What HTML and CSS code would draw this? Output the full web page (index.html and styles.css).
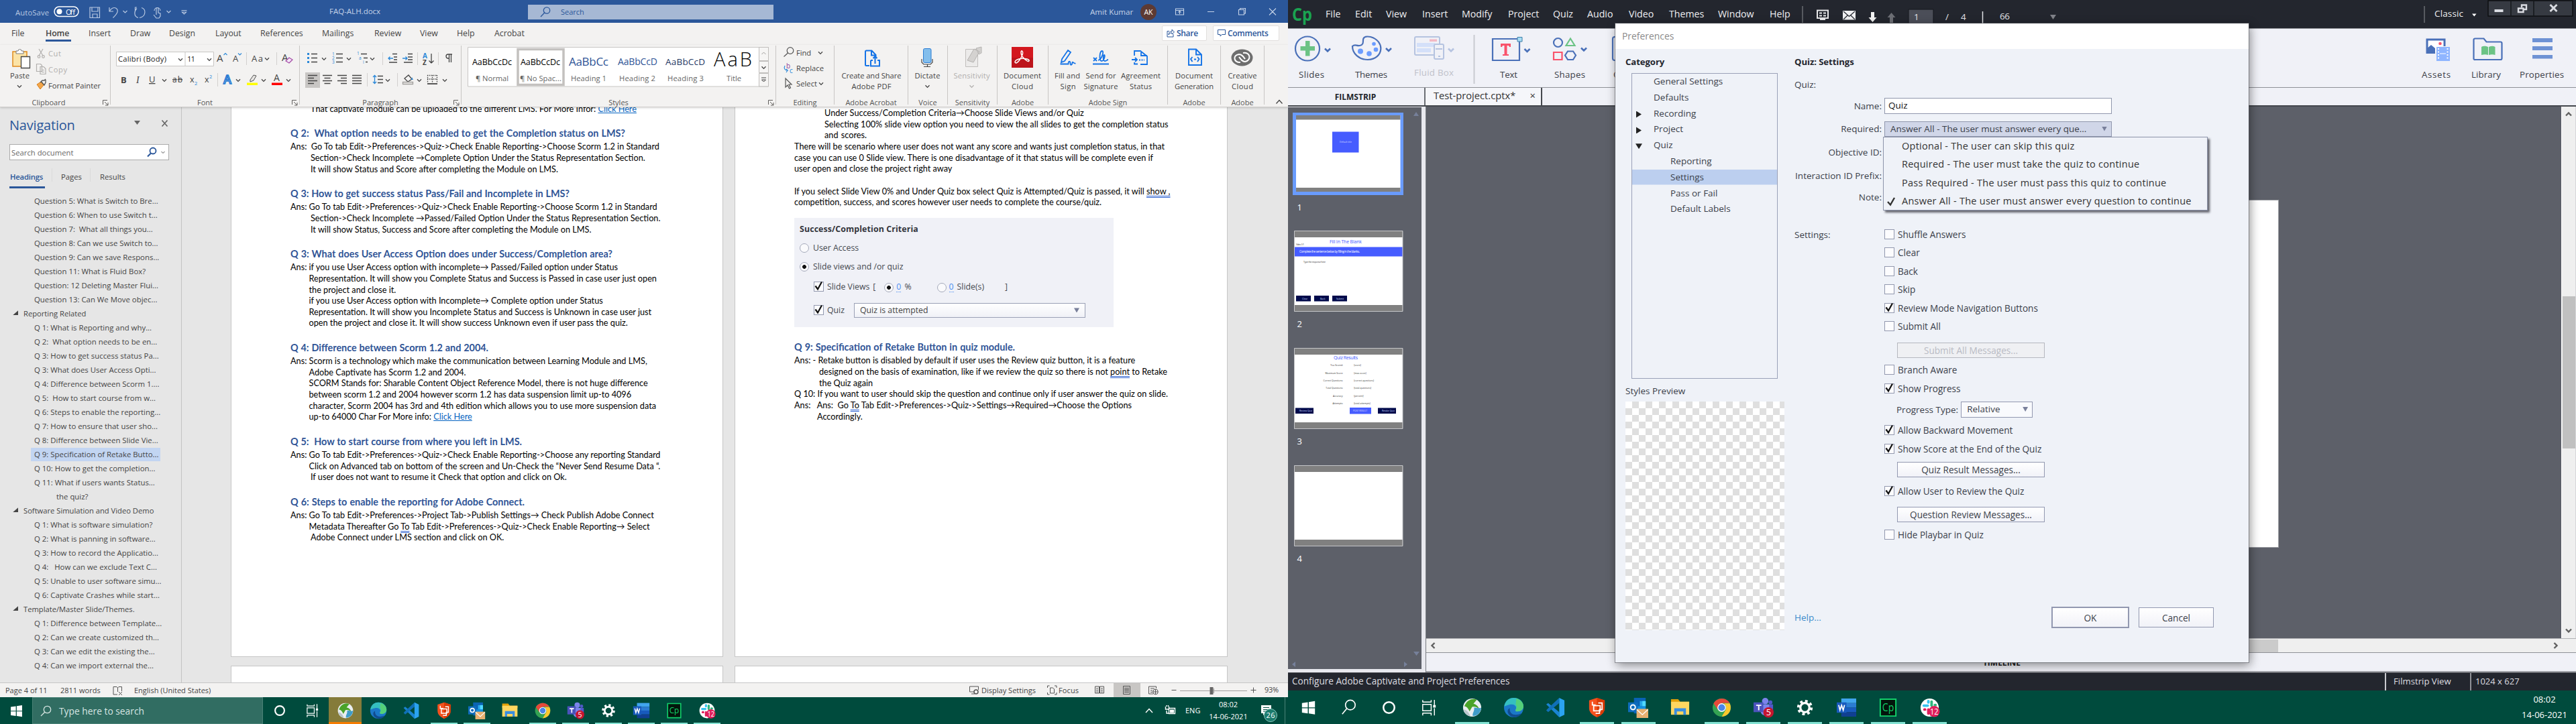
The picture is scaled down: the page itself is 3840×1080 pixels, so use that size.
FILE: index.html
```html
<!DOCTYPE html>
<html lang="en">
<head>
<meta charset="utf-8">
<title>FAQ-ALH.docx and Adobe Captivate</title>
<link rel="stylesheet" href="styles.css">
</head>
<body>
<svg class="defs" aria-hidden="true">
  <symbol id="chev" viewBox="0 0 8 6"><path d="M1 1.2 4 4.4 7 1.2" fill="none" stroke="currentColor" stroke-width="1.3"/></symbol>
  <symbol id="launch" viewBox="0 0 9 9"><path d="M.5 7V.5H7M3 3l5 5M8 4v4H4" fill="none" stroke="#605e5c"/></symbol>
  <symbol id="i-win" viewBox="0 0 32 32"><path fill="#fff" d="M6 9l9-1.300v8H6zM16.500 7.500 26 6v9.700h-9.500zM6 17h9v8l-9-1.300zM16.500 17H26v9.500L16.500 25z"/></symbol>
  <symbol id="i-find" viewBox="0 0 32 32"><g fill="none" stroke="#fff" stroke-width="1.700"><circle cx="18.500" cy="12" r="7.500"/><path d="M13 17.500 6 26"/></g></symbol>
  <symbol id="i-cort" viewBox="0 0 32 32"><circle cx="16" cy="16" r="8.500" fill="none" stroke="#fff" stroke-width="2.600"/></symbol>
  <symbol id="i-task" viewBox="0 0 32 32"><path fill="none" stroke="#fff" stroke-width="1.500" d="M6 11h13v10H6zM6 8V4.500M19 8V4.500M6 7.500h13M6 24.500h13M6 24v4M19 24v4M24 4v8M24 17v11"/><path fill="#fff" d="M22 12h4v4h-4z"/></symbol>
  <symbol id="i-cam" viewBox="0 0 32 32"><circle cx="16" cy="16" r="14" fill="#e9eef0"/><path d="M4 14C8 3 18 1 23 4l-5 6c5 1 8 5 9 9-3-4-7-5-11-4L12 22C10 17 7 14 4 14z" fill="#4aa329"/><path d="M17 29c-1-5 3-7 2-13 5 0 9 2 11 0-1 8-6 13-13 13z" fill="#3f9cc9"/><path d="M3 19c4 0 8 4 10 10-6-1-9-5-10-10z" fill="#b9c6cc"/></symbol>
  <symbol id="i-edge" viewBox="0 0 32 32"><circle cx="16" cy="16" r="15" fill="#1b78c8"/><path d="M1.500 14C3 5 9 1 16 1c9 0 15 6 15 13 0 5-4 8-9 8-3 0-4-1-3-3 2-3 0-8-6-8-6 0-10 3-11.500 3z" fill="#35bfc0"/><path d="M20 2c7 2 11 7 11 12 0 5-4 8-9 8-3 0-4-1-3-3 2-3 2-6 0-8z" fill="#5fd661" opacity=".75"/><path d="M10 17c-1 8 6 13 18 8-4 6-12 8-18 3-5-4-4-10 0-11z" fill="#114c8f"/></symbol>
  <symbol id="i-code" viewBox="0 0 32 32"><path fill="#1a84d2" d="M22 1v30L5 14l-3-3 3-2 17 14z"/><path fill="#1070b8" d="M22 1 5 17l-3 3 3 3L22 9z"/><path fill="#2ba3f0" d="m22 1 8 4v22l-8 4z"/></symbol>
  <symbol id="i-brave" viewBox="0 0 32 32"><path fill="#f4511e" d="m16 1 12 4v12c0 8-8 12-12 14C12 29 4 25 4 17V5z"/><path fill="#d93a06" d="m16 1 12 4v12c0 8-8 12-12 14z"/><path fill="none" stroke="#fff" stroke-width="1.800" d="M9 7v5h5M11 13h10v8H11zM14 25h6v-6h4V9h-6"/></symbol>
  <symbol id="i-out" viewBox="0 0 32 32"><path fill="#0a63b4" d="M9 1h18v24H9z"/><path fill="#28a8ea" d="M18 6h9v8h-9z"/><path fill="#50d9ff" d="M22 6h5v8h-5z"/><path fill="#1490df" d="M13 14h14v11H13z"/><path fill="#0f6cbd" d="M0 8h15v15H0z"/><circle cx="7.500" cy="15.500" r="3.600" fill="none" stroke="#fff" stroke-width="2"/><path fill="#e8b070" d="M13 18h18v14H13z"/><path d="m13.500 19 8.500 8 8.500-8" fill="none" stroke="#fff" stroke-width="1.400"/></symbol>
  <symbol id="i-exp" viewBox="0 0 32 32"><path fill="#e3a008" d="M2 3h11l3 4h14v4H2z"/><path fill="#ffd660" d="M2 7h28v20H2z"/><path fill="#3a8ee0" d="M7 27V17h18v10h-4v-5H11v5z"/></symbol>
  <symbol id="i-chrome" viewBox="0 0 32 32"><circle cx="16" cy="16" r="14" fill="#34a352"/><path fill="#e5493a" d="M3.500 9.500C6 5 11 2 16 2c5.500 0 10 3 12.500 7H16l-6 10z"/><path fill="#fbc72e" d="M28.500 9.500C32 17 29 29 16 30l6.500-11c1-3 0-7-3-9.500z"/><circle cx="16" cy="16" r="6.600" fill="#fff"/><circle cx="16" cy="16" r="5.200" fill="#4a86e8"/></symbol>
  <symbol id="i-teams" viewBox="0 0 32 32"><circle cx="19" cy="6" r="5" fill="#7b83eb"/><circle cx="27" cy="8" r="3" fill="#5059c9"/><path fill="#5059c9" d="M12 11h19v9c0 5-4 8-8 8z"/><path fill="#7b83eb" d="M12 11h13v10c0 4-3 7-7 7-3 0-6-3-6-6z"/><path fill="#4b53bc" d="M1 8h15v15H1z"/><path fill="#fff" d="M5 11.500h8v2h-3V20H8v-6.500H5z"/><circle cx="24" cy="23.500" r="8" fill="#c4152f"/><text x="24" y="28.300" font-size="13" text-anchor="middle" fill="#fff">5</text></symbol>
  <symbol id="i-gear" viewBox="0 0 32 32"><circle cx="16" cy="16" r="7" fill="none" stroke="#fff" stroke-width="3.400"/><circle cx="16" cy="16" r="10" fill="none" stroke="#fff" stroke-width="4" stroke-dasharray="3.927 3.927"/></symbol>
  <symbol id="i-word" viewBox="0 0 32 32"><path fill="#41a5ee" d="M8 2h23v7H8z"/><path fill="#2b7cd3" d="M8 9h23v7H8z"/><path fill="#185abd" d="M8 16h23v7H8z"/><path fill="#103f91" d="M8 23h23v7H8z"/><path fill="#185abd" d="M1 8h15v16H1z"/><path d="m4 12 2 8 2.500-7.500L11 20l2-8" fill="none" stroke="#fff" stroke-width="1.800"/></symbol>
  <symbol id="i-cp" viewBox="0 0 32 32"><path fill="#03150c" stroke="#12d06a" stroke-width="2" d="M4 3h24v26H4z"/><text x="16" y="21.500" font-size="16" text-anchor="middle" fill="#12d06a" textLength="18" lengthAdjust="spacingAndGlyphs">Cp</text></symbol>
  <symbol id="i-slack" viewBox="0 0 32 32"><circle cx="16" cy="16" r="14" fill="#fff"/><g stroke-width="4" stroke-linecap="round"><path d="M7 13h6" stroke="#36c5f0"/><path d="M14 6v2" stroke="#36c5f0"/><path d="M19 7v6" stroke="#2eb67d"/><path d="M24 12h1" stroke="#2eb67d"/><path d="M8 19h1M14 19v6" stroke="#e01e5a"/></g><circle cx="23" cy="22" r="8.500" fill="#e01e5a"/><text x="23" y="27" font-size="13" text-anchor="middle" fill="#fff" textLength="13" lengthAdjust="spacingAndGlyphs">12</text></symbol>
  <symbol id="tick" viewBox="0 0 16 16"><path d="M3.500 7.500 7 12.500 13 1.500" fill="none" stroke="#111" stroke-width="2.200"/></symbol>
</svg>

<main class="desktop">
<section class="word">
  <header class="w-title">
    <svg class="w-quick" width="300" height="34" viewBox="0 0 300 34">
      <text x="23" y="21.500" textLength="50" fill="#b9c9e2">AutoSave</text>
      <rect x="81" y="9" width="36" height="14.500" rx="7.200" fill="none" stroke="#fff" stroke-width="1.500"/><circle cx="88.500" cy="16.200" r="4" fill="#fff"/><text x="98" y="20.500" textLength="14" fill="#fff">Off</text>
      <g fill="none" stroke="#b9c9e2" stroke-width="1.200"><path d="M134 10h14.500v15.500H134zM137 10v6h9v-6M138 25v-5h7v5"/><path d="M163 10v6h6M163.500 15.500c2-4 6-6 9-4.500 5 3 3 8-4 14.500"/><path d="m183.500 15 3 3 3-3"/><path d="M204 10h-2.500v5M206 25.500c-7-2-6-10-2-14M211 10.500c7 2 7 13-3 15M216 10"/><path d="M233 21v-9a1.500 1.500 0 0 1 3 0v6l3 1v4l-2 3h-4l-4-5M230 15a4.500 4.500 0 1 1 9 0"/><path d="m248.500 15 3 3 3-3M270.500 14.500h8M271.500 17l3 3 3-3z"/></g>
    </svg>
    <span class="w-file">FAQ-ALH.docx</span>
    <div class="w-search"><svg width="16" height="16" viewBox="0 0 16 16"><g fill="none" stroke="#2b579a" stroke-width="1.300"><circle cx="10" cy="5.500" r="4.700"/><path d="M6.700 9 1 15"/></g></svg><span>Search</span></div>
    <span class="w-user">Amit Kumar</span><span class="w-avatar">AK</span>
    <svg class="w-winbtns" width="196" height="34" viewBox="1724 0 196 34"><g fill="none" stroke="#c5d3e8" stroke-width="1.100"><path d="M1752.500 12h12v9h-12zM1752.500 14.500h12M1758.500 20v-4M1756.500 17.500l2-2 2 2M1800 16.500h10M1846.500 13.500h8v7.500h-8zM1848.500 13.500v-2h8v7.500h-2M1892 11.500l10 10M1902 11.500l-10 10"/></g></svg>
  </header>

  <nav class="w-tabs">
    <span>File</span><span class="on">Home</span><span>Insert</span><span>Draw</span><span>Design</span><span>Layout</span><span>References</span><span>Mailings</span><span>Review</span><span>View</span><span>Help</span><span>Acrobat</span>
    <div class="w-share">
      <button><svg width="12" height="13" viewBox="0 0 12 13"><path d="M4 3.500H1V12h9V8M3 9c0-4 2-5 5-5V1l3.500 4L8 8V6C6 6 4 6.500 3 9z" fill="none" stroke="#2b579a"/></svg>Share</button>
      <button><svg width="12" height="13" viewBox="0 0 12 13"><path d="M.5 1.500h11v7h-5L4 11V8.500H.5z" fill="none" stroke="#2b579a"/></svg>Comments</button>
    </div>
  </nav>

  <div class="ribbon">
    <div class="grp g1">
      <svg width="164" height="77" viewBox="0 68 164 77">
        <path d="M19 77h21v22H19z" fill="#fbe3a6" stroke="#e08a1e" stroke-width="1.500"/><path d="M24 80v-4h3a2.500 2.500 0 0 1 5 0h3v4z" fill="#fff" stroke="#7a7a7a"/><path d="M31.500 84.500h13v17h-13z" fill="#fff" stroke="#444" stroke-width="1.300"/>
        <text x="15" y="117" textLength="29">Paste</text><use href="#chev" x="25" y="126" width="8" height="6"/>
        <g fill="none" stroke="#b1afad" stroke-width="1.200"><path d="m58 73 6 10M64 73l-6 10"/><circle cx="58" cy="84.500" r="1.800"/><circle cx="64.500" cy="84.500" r="1.800"/><path d="M54.500 95.500h6l2 2v9h-8zM60 99.500h5l3 3v8h-8zM62 104.500h4M62 107.500h4"/></g>
        <g class="dim"><text x="72" y="84" textLength="19">Cut</text><text x="72" y="108" textLength="28">Copy</text></g>
        <path d="m55 126 6-4 4 5-5 6z" fill="#f3a64a" stroke="#d87f1c"/><path d="m60 123 3-3h3l2-2M61 121l5 6 2-4v-4" fill="none" stroke="#555" stroke-width="1.300"/><text x="72" y="132" textLength="78">Format Painter</text>
      </svg>
      <div class="lbl"><span>Clipboard</span><svg width="9" height="9"><use href="#launch"/></svg></div>
    </div>
    <div class="grp g2">
      <svg width="281" height="77" viewBox="165 68 281 77">
        <path d="M173.500 77.500h145v21h-145zM276 77.500v21" fill="#fff" stroke="#c8c6c4"/>
        <g fill="#222"><text x="176" y="92" textLength="72">Calibri (Body)</text><text x="279" y="92" textLength="12">11</text></g><use href="#chev" x="265" y="86" width="8" height="6"/><use href="#chev" x="308" y="86" width="8" height="6"/>
        <text x="323" y="92" font-size="15">A</text><text x="347" y="92" font-size="13">A</text><path d="m333.500 82 2.500-2.500 2.500 2.500M355 79.500l2.500 2.500 2.500-2.500" fill="none" stroke="#2b88d8" stroke-width="1.200"/>
        <path d="M367.500 78v19M412.500 78v19M324.500 109v20" stroke="#d2d0ce"/>
        <text x="375" y="92" font-size="13" textLength="17">Aa</text><use href="#chev" x="394" y="85" width="8" height="6"/>
        <text x="420" y="91" font-size="15">A</text><path d="m426 91 5-5 5 3-5 5z" fill="#f3e6f7" stroke="#a349a4" stroke-width="1.200"/>
        <text x="180" y="123.500" font-size="13" font-weight="700">B</text><text x="203" y="123.500" font-size="14" class="ital">I</text><text x="222" y="123" font-size="13" text-decoration="underline">U</text><use href="#chev" x="241" y="117" width="8" height="6"/>
        <text x="257" y="123" font-size="12" text-decoration="line-through" textLength="15">ab</text><text x="283" y="123" font-size="12.500">x</text><text x="290" y="127" font-size="7.500" fill="#2b88d8">2</text><text x="305" y="123" font-size="12.500">x</text><text x="312" y="117" font-size="7.500" fill="#2b88d8">2</text>
        <text x="333" y="125" font-size="18" font-weight="600" fill="#fff" stroke="#2b7cd3" stroke-width="1.600">A</text><use href="#chev" x="351" y="117" width="8" height="6"/>
        <path d="m373 119 5-7 4 1-4 7-5 2z" fill="#e6e4e2" stroke="#555"/><path d="M368 123.500h16v3.500h-16z" fill="#ff0"/><use href="#chev" x="389" y="117" width="8" height="6"/>
        <text x="408" y="121" font-size="14">A</text><path d="M405 123.500h16v3.500h-16z" fill="#f00"/><use href="#chev" x="426" y="117" width="8" height="6"/>
      </svg>
      <div class="lbl"><span>Font</span><svg width="9" height="9"><use href="#launch"/></svg></div>
    </div>
    <div class="grp g3">
      <svg width="240" height="77" viewBox="447 68 240 77">
        <path d="M455 108h22v23h-22z" fill="#c8c6c4"/>
        <g fill="none" stroke="#444" stroke-width="1.300"><path d="M464 80.500h9M464 86.500h9M464 92.500h9M501 80.500h10M501 86.500h10M501 92.500h10M538 80.500h9M542 86.500h6M545 92.500h3M585 80.500h7M587 85h5M587 89h5M580 93h12M608 80.500h7M608 85h7M608 89h7M602 93h13"/><path d="M459 112.500h14M459 116.500h9M459 120.500h14M459 124.500h9M481 112.500h14M483.500 116.500h9M481 120.500h14M483.500 124.500h9M503 112.500h14M508 116.500h9M503 120.500h14M508 124.500h9M525 112.500h14M525 116.500h14M525 120.500h14M525 124.500h14M563 113.500h8M563 118.500h8M563 123.500h8"/><path d="M643 80v14M643 94l-3.500-3.500M643 94l3.500-3.500M672.500 81v12M669.500 81v12M674 81h-6a3 3 0 0 0 0 6h1.500"/><path d="M637 112.500h15M637.500 112v12M644.500 112v12M651.500 112v12M637 118h15" stroke-dasharray="1.500 1.500"/><path d="M637 125h15" stroke-width="1.800"/><path d="m603 117 6-5 5 6-6 4z"/><path d="M600.500 122.500h15v3h-15z" stroke="#a19f9d"/></g>
        <g fill="#2b88d8"><path d="M458 79h3v3h-3zM458 85h3v3h-3zM458 91h3v3h-3zM614 115l2 4h-3z"/><g font-size="6.500"><text x="495" y="82.500">1</text><text x="495" y="89">2</text><text x="495" y="95">3</text><text x="532" y="82">1</text><text x="535" y="89">a</text><text x="541" y="95">i</text></g><text x="630" y="87" font-size="10" font-weight="700">A</text></g><text x="630" y="96.500" font-size="10" font-weight="700">Z</text>
        <g fill="none" stroke="#2b88d8" stroke-width="1.300"><path d="M586 87h-7M581.500 84.500 579 87l2.500 2.500M600 87h7M604.500 84.500 607 87l-2.500 2.500M558.500 112.500v12M556 115l2.500-2.500 2.500 2.500M556 122l2.500 2.500 2.500-2.500"/></g>
        <path d="M570.500 78v19M622.500 78v19M653.500 78v19M547.500 109v20M592.500 109v20" stroke="#d2d0ce"/>
        <use href="#chev" x="479" y="85" width="8" height="6"/><use href="#chev" x="516" y="85" width="8" height="6"/><use href="#chev" x="551" y="85" width="8" height="6"/><use href="#chev" x="574" y="117" width="8" height="6"/><use href="#chev" x="621" y="117" width="8" height="6"/><use href="#chev" x="659" y="117" width="8" height="6"/>
      </svg>
      <div class="lbl"><span>Paragraph</span><svg width="9" height="9"><use href="#launch"/></svg></div>
    </div>
    <div class="grp g4">
      <svg width="468" height="77" viewBox="688 68 468 77">
        <path d="M697.500 70.500h448v58.500h-448z" fill="#fff" stroke="#c8c6c4"/><path d="M1131.500 70.500h14v20h-14zM1131.500 91.500h14v17h-14zM1131.500 109.500h14v19.500h-14z" fill="#f6f5f4" stroke="#c0bebc"/>
        <path d="M772 73.500h68v53h-68z" fill="none" stroke="#c3c1bf" stroke-width="3.500"/>
        <path d="m1135.500 81 3-3 3 3" fill="none" stroke="#a19f9d"/><use href="#chev" x="1134.500" y="98" width="8" height="6"/><path d="M1135 116h7M1135.500 119h6l-3 3z" fill="none" stroke="#444"/>
        <g fill="#000" font-size="12.500"><text x="704" y="97" textLength="59">AaBbCcDc</text><text x="776" y="97" textLength="59">AaBbCcDc</text><text x="1064" y="99" textLength="57" font-size="29" font-weight="300">AaB</text></g>
        <g fill="#2f5496"><text x="848" y="98" textLength="59" font-size="17">AaBbCc</text><text x="921" y="97" textLength="59" font-size="14">AaBbCcD</text><text x="992" y="97" textLength="59" font-size="13.500" fill="#1f3763">AaBbCcD</text></g>
        <g fill="#666"><text x="709" y="121" textLength="49">¶ Normal</text><text x="775" y="121" textLength="62">¶ No Spac...</text><text x="851" y="121" textLength="53">Heading 1</text><text x="923" y="121" textLength="54">Heading 2</text><text x="995" y="121" textLength="54">Heading 3</text><text x="1083" y="121" textLength="22">Title</text></g>
      </svg>
      <div class="lbl"><span>Styles</span><svg width="9" height="9"><use href="#launch"/></svg></div>
    </div>
    <div class="grp g5">
      <svg width="86" height="77" viewBox="1157 68 86 77">
        <g fill="none" stroke="#555" stroke-width="1.200"><circle cx="1178" cy="75.500" r="4.800"/><path d="m1174.500 79-6 5.500M1171 117v13l3-3 2.500 5 2-1-2.500-5h4z"/></g>
        <text x="1187" y="83" textLength="22">Find</text><use href="#chev" x="1219" y="76" width="8" height="6"/>
        <text x="1172" y="102" font-size="10" fill="#8f3f97">b</text><text x="1177" y="109" font-size="10" fill="#2b88d8">c</text><path d="M1170 98c-2 4 0 7 4 7l-2-2m2 2-2 3" fill="none" stroke="#2b88d8" stroke-width="1.200"/><text x="1187" y="106" textLength="41">Replace</text>
        <text x="1187" y="129" textLength="31">Select</text><use href="#chev" x="1220" y="122" width="8" height="6"/>
      </svg>
      <div class="lbl"><span>Editing</span></div>
    </div>
    <div class="grp g6">
      <svg width="109" height="77" viewBox="1244 68 109 77">
        <path d="M1296 98h-4.500a1.500 1.500 0 0 1-1.500-1.500V77a1.500 1.500 0 0 1 1.500-1.500h8l6 6.500v4M1299 76v6.500h6M1298 90v8.500h13V90h-3M1301 90h-3M1304.500 95V84M1301.500 87l3-3 3 3" fill="none" stroke="#1473e6" stroke-width="2"/>
        <g text-anchor="middle"><text x="1299" y="117" textLength="89">Create and Share</text><text x="1299" y="133" textLength="59">Adobe PDF</text></g>
      </svg>
      <div class="lbl"><span>Adobe Acrobat</span></div>
    </div>
    <div class="grp g7">
      <svg width="58" height="77" viewBox="1354 68 58 77">
        <rect x="1376.500" y="72.500" width="11.500" height="21" rx="2" fill="#83beec" stroke="#2b7cd3"/><path d="M1374 88v5l3 3h10l3-3v-5M1382.500 96v3M1377 99.500h10" fill="none" stroke="#444" stroke-width="1.200"/>
        <g text-anchor="middle"><text x="1382.500" y="117" textLength="38">Dictate</text></g><use href="#chev" x="1378.500" y="126" width="8" height="6"/>
      </svg>
      <div class="lbl"><span>Voice</span></div>
    </div>
    <div class="grp g8">
      <svg width="73" height="77" viewBox="1413 68 73 77">
        <path d="M1439.500 73.500h18v26h-18z" fill="#ecebea" stroke="#c0bebc"/><path d="m1442 90 10-17 8 4-9 16zM1455 72l8-2v9l-4 2z" fill="#d4d2d0" stroke="#b5b3b1"/>
        <g text-anchor="middle" class="dim"><text x="1448.500" y="117" textLength="54">Sensitivity</text><use href="#chev" x="1444.500" y="126" width="8" height="6"/></g>
      </svg>
      <div class="lbl"><span>Sensitivity</span></div>
    </div>
    <div class="grp g9">
      <svg width="75" height="77" viewBox="1487 68 75 77">
        <path d="M1508 70h32v31h-32z" fill="#d3181f"/><path d="M1508 86h32v15h-32z" fill="#ab1218" opacity=".55"/><path d="M1513 92c2-4 10-6 18-4 6 2 2 5-1 2-5-3-8-8-8-12 0-4 4-2 2 4-2 5-6 11-9 12-2 0-2-1-2-2z" fill="none" stroke="#fff" stroke-width="1.500"/>
        <g text-anchor="middle"><text x="1524" y="117" textLength="56">Document</text><text x="1524" y="133" textLength="32">Cloud</text></g>
      </svg>
      <div class="lbl"><span>Adobe</span></div>
    </div>
    <div class="grp g10">
      <svg width="177" height="77" viewBox="1563 68 177 77">
        <g fill="none" stroke="#1473e6" stroke-width="1.800"><path d="m1582 93 1-5 9-13 4 3-9 13zM1580.500 95.500h12c0-5 3-5 3-1s3 2 3-1 2 2 5 1M1629 95.500h24M1630 86l5 5M1635 86l-5 5M1637 90c6-2 9-14 6-14-4 0-5 15-1 15s6-9 4-9-2 9 1 9 3-2 5-2"/><path d="M1691 83v-7h9l10 8v12h-10M1701 76v7h9M1687 89h8M1692 86l3 3-3 3M1691 93v2.500h5"/><path d="M1698 89.500h8" stroke-dasharray="2 1.500"/></g>
        <g text-anchor="middle"><text x="1591" y="117" textLength="38">Fill and</text><text x="1592" y="133" textLength="23">Sign</text><text x="1641" y="117" textLength="45">Send for</text><text x="1641" y="133" textLength="51">Signature</text><text x="1700.500" y="117" textLength="59">Agreement</text><text x="1700.500" y="133" textLength="33">Status</text></g>
      </svg>
      <div class="lbl"><span>Adobe Sign</span></div>
    </div>
    <div class="grp g11">
      <svg width="78" height="77" viewBox="1741 68 78 77">
        <path d="M1772 73.500h11l8 8V97h-19zM1783 74v7.500h7.500M1777.500 85l-2.500 3 2.500 4M1785 85l2.500 3-2.500 4M1780 88.500h3" fill="none" stroke="#1473e6" stroke-width="1.900"/>
        <g text-anchor="middle"><text x="1780" y="117" textLength="56">Document</text><text x="1780" y="133" textLength="58">Generation</text></g>
      </svg>
      <div class="lbl"><span>Adobe</span></div>
    </div>
    <div class="grp g12">
      <svg width="64" height="77" viewBox="1820 68 64 77">
        <ellipse cx="1851.500" cy="86" rx="16" ry="12.500" fill="#6e6e6e"/><g fill="none" stroke="#fff" stroke-width="2"><path d="M1849 93c-10 1-12-11-2-12 4 0 6 3 9 7"/><path d="M1853 79c11-2 13 11 3 13-4 0-6-3-9-7"/></g>
        <g text-anchor="middle"><text x="1852" y="117" textLength="43">Creative</text><text x="1852" y="133" textLength="32">Cloud</text></g>
      </svg>
      <div class="lbl"><span>Adobe</span></div>
    </div>
    <svg class="collapse" width="12" height="8" viewBox="0 0 12 8"><path d="m1.500 6.500 4.500-5 4.500 5" fill="none" stroke="#444" stroke-width="1.300"/></svg>
  </div>

  <div class="w-body">
    <aside class="w-nav">
      <div class="n-head"><h2>Navigation</h2><svg width="52" height="14" viewBox="0 0 52 14"><path d="M1 2h9l-4.500 6z" fill="#666"/><path d="m42.500 1.500 8 9M50.500 1.500l-8 9" stroke="#666" stroke-width="1.700"/></svg></div>
      <div class="n-search"><span>Search document</span><svg width="34" height="16" viewBox="0 0 34 16"><circle cx="11" cy="6" r="4.500" fill="none" stroke="#2b579a" stroke-width="1.800"/><path d="m8 9.500-5 5" stroke="#2b579a" stroke-width="2.200"/><path d="m23.500 7 2.500 2.500L28.500 7" fill="none" stroke="#555"/></svg></div>
      <div class="n-tabs"><span class="on">Headings</span><span>Pages</span><span>Results</span></div>
      <ul class="n-list">
        <li>Question 5: What is Switch to Bre...</li><li>Question 6: When to use Switch t...</li><li>Question 7:&nbsp; What all things you...</li><li>Question 8: Can we use Switch to...</li><li>Question 9: Can we save Respons...</li><li>Question 11: What is Fluid Box?</li><li>Question: 12 Deleting Master Flui...</li><li>Question 13: Can We Move objec...</li>
        <li class="top">Reporting Related</li>
        <li>Q 1: What is Reporting and why...</li><li>Q 2:&nbsp; What option needs to be en...</li><li>Q 3: How to get success status Pa...</li><li>Q 3: What does User Access Opti...</li><li>Q 4: Difference between Scorm 1....</li><li>Q 5:&nbsp; How to start course from w...</li><li>Q 6: Steps to enable the reporting...</li><li>Q 7: How to ensure that user sho...</li><li>Q 8: Difference between Slide Vie...</li><li class="sel">Q 9: Specification of Retake Butto...</li><li>Q 10: How to get the completion...</li><li>Q 11: What if users wants Status...</li><li class="deep">the quiz?</li>
        <li class="top">Software Simulation and Video Demo</li>
        <li>Q 1: What is software simulation?</li><li>Q 2: What is panning in software...</li><li>Q 3: How to record the Applicatio...</li><li>Q 4:&nbsp;&nbsp; How can we exclude Text C...</li><li>Q 5: Unable to user software simu...</li><li>Q 6: Captivate Crashes while start...</li>
        <li class="top">Template/Master Slide/Themes.</li>
        <li>Q 1: Difference between Template...</li><li>Q 2: Can we create customized th...</li><li>Q 3: Can we edit the existing the...</li><li>Q 4: Can we import external the...</li>
      </ul>
    </aside>
    <div class="pages">
      <article class="page left">
        <p class="in cut">That captivate module can be uploaded to the different LMS. For More Infor: <a>Click Here</a></p>
        <section><h3>Q 2:&nbsp; What option needs to be enabled to get the Completion status on LMS?</h3>
          <p>Ans:&nbsp; Go To tab Edit-&gt;Preferences-&gt;Quiz-&gt;Check Enable Reporting-&gt;Choose Scorm 1.2 in Standard</p><p class="in">Section-&gt;Check Incomplete →Complete Option Under the Status Representation Section.</p><p class="in">It will show Status and Score after completing the Module on LMS.</p></section>
        <section><h3>Q 3: How to get success status Pass/Fail and Incomplete in LMS?</h3>
          <p>Ans: Go To tab Edit-&gt;Preferences-&gt;Quiz-&gt;Check Enable Reporting-&gt;Choose Scorm 1.2 in Standard</p><p class="in">Section-&gt;Check Incomplete →Passed/Failed Option Under the Status Representation Section.</p><p class="in">It will show Status, Success and Score after completing the Module on LMS.</p></section>
        <section><h3>Q 3: What does User Access Option does under Success/Completion area?</h3>
          <p>Ans: if you use User Access option with incomplete→ Passed/Failed option under Status</p><p class="in2">Representation. It will show you Complete Status and Success is Passed in case user just open</p><p class="in2">the project and close it.</p><p class="in2">if you use User Access option with Incomplete→ Complete option under Status</p><p class="in2">Representation. It will show you Incomplete Status and Success is Unknown in case user just</p><p class="in2">open the project and close it. It will show success Unknown even if user pass the quiz.</p></section>
        <section><h3>Q 4: Difference between Scorm 1.2 and 2004.</h3>
          <p>Ans: Scorm is a technology which make the communication between Learning Module and LMS,</p><p class="in2">Adobe Captivate has Scorm 1.2 and 2004.</p><p class="in2">SCORM Stands for: Sharable Content Object Reference Model, there is not huge difference</p><p class="in2">between scorm 1.2 and 2004 however scorm 1.2 has data suspension limit up-to 4096</p><p class="in2">character, Scorm 2004 has 3rd and 4th edition which allows you to use more suspension data</p><p class="in2">up-to 64000 Char For More info: <a>Click Here</a></p></section>
        <section><h3>Q 5:&nbsp; How to start course from where you left in LMS.</h3>
          <p>Ans: Go To tab Edit-&gt;Preferences-&gt;Quiz-&gt;Check Enable Reporting-&gt;Choose any reporting Standard</p><p class="in2">Click on Advanced tab on bottom of the screen and Un-Check the “Never Send Resume Data “.</p><p class="in">If user does not want to resume it Check that option and click on Ok.</p></section>
        <section><h3>Q 6: Steps to enable the reporting for Adobe Connect.</h3>
          <p>Ans: Go To tab Edit-&gt;Preferences-&gt;Project Tab-&gt;Publish Settings→ Check Publish Adobe Connect</p><p class="in2">Metadata Thereafter Go <u>To</u> Tab Edit-&gt;Preferences-&gt;Quiz-&gt;Check Enable Reporting→ Select</p><p class="in">Adobe Connect under LMS section and click on OK.</p></section>
      </article>
      <article class="page right">
        <div class="para"><p class="in3">Under Success/Completion Criteria→Choose Slide Views and/or Quiz</p><p class="in3">Selecting 100% slide view option you need to view the all slides to get the completion status</p><p class="in3">and scores.</p>
        <p>There will be scenario where user does not want any score and wants just completion status, in that</p><p>case you can use 0 Slide view. There is one disadvantage of it that status will be complete even if</p><p>user open and close the project right away</p><p>&nbsp;</p>
        <p>If you select Slide View 0% and Under Quiz box select Quiz is Attempted/Quiz is passed, it will <u>show ,</u></p><p>competition, success, and scores however user needs to complete the course/quiz.</p></div>
        <div class="criteria">
          <b>Success/Completion Criteria</b>
          <div class="c-row r1"><i class="radio"></i><span>User Access</span></div>
          <div class="c-row r2"><i class="radio on"></i><span>Slide views and /or quiz</span></div>
          <div class="c-row r3"><i class="box"><svg><use href="#tick"/></svg></i><span>Slide Views</span><span>[</span><i class="radio on"></i><em>0</em><span>%</span><i class="radio"></i><em>0</em><span>Slide(s)</span><span>]</span></div>
          <div class="c-row r4"><i class="box"><svg><use href="#tick"/></svg></i><span>Quiz</span><div class="c-select">Quiz is attempted<i class="down"></i></div></div>
        </div>
        <section><h3>Q 9: Specification of Retake Button in quiz module.</h3>
        <p>Ans: - Retake button is disabled by default if user uses the Review quiz button, it is a feature</p><p class="in4">designed on the basis of examination, like if we review the quiz so there is not <u>point</u> to Retake</p><p class="in4">the Quiz again</p><p>Q 10: If you want to user should skip the question and continue only if user answer the quiz on slide.</p><p>Ans:&nbsp;&nbsp; Ans:&nbsp; Go <u>To</u> Tab Edit-&gt;Preferences-&gt;Quiz-&gt;Settings→Required→Choose the Options</p><p class="in5">Accordingly.</p></section>
      </article>
      <article class="page next"></article><article class="page next"></article>
    </div>
  </div>

  <footer class="w-status">
    <span>Page 4 of 11</span><span>2811 words</span>
    <svg width="16" height="15" viewBox="0 0 16 15"><path d="M7 13H1V1.500h5l1.500 1.500L9 1.500h4.500V8M7.500 3v6M9 9l5 5M14 9l-5 5" fill="none" stroke="#555"/></svg>
    <span>English (United States)</span>
    <svg class="w-views" width="480" height="22" viewBox="1440 1018 480 22">
      <path d="M1660 1018h40v22h-40z" fill="#c8c6c4"/>
      <g fill="none" stroke="#555"><path d="M1452 1031h-6.500v-8h13v5M1448 1034h5"/><circle cx="1455" cy="1031" r="3" stroke-width="1.500"/><path d="M1564.500 1022h-3v3M1572 1022h3v3M1564.500 1035h-3v-3M1572 1035h3v-3M1565.500 1025h4l2 2v6h-6zM1632.500 1023h6v10h-6zM1639.500 1023h6v10h-6zM1634 1026h3M1634 1028.500h3M1634 1031h3M1641 1026h3M1641 1028.500h3M1641 1031h3M1674.500 1022.500h10v12h-10zM1676 1025.500h7M1676 1027.500h7M1676 1029.500h7M1676 1031.500h7M1719 1034h-6.500v-11h11v3M1715 1026h6M1715 1029h3M1715 1031.500h3"/><circle cx="1722.500" cy="1031" r="3.800"/><path d="M1719 1031h7M1722.500 1027.500v7M1746.500 1028.500h7M1864.500 1028.500h8M1868.500 1024.500v8"/></g>
      <path d="M1759 1029.500h100" stroke="#a19f9d"/><path d="M1809.500 1026v7" stroke="#a19f9d"/><path d="M1803.500 1024h5v11h-5z" fill="#666"/>
      <text x="1463" y="1033" textLength="81">Display Settings</text><text x="1578" y="1033" textLength="30">Focus</text><text x="1885" y="1032" textLength="21">93%</text>
    </svg>
  </footer>

  <div class="taskbar tb1">
    <div class="start"><svg><use href="#i-win"/></svg></div>
    <div class="tb-search"><svg width="17" height="17" viewBox="0 0 17 17"><g fill="none" stroke="#d7e5e2" stroke-width="1.300"><circle cx="10.500" cy="6.500" r="5.200"/><path d="M6.800 10.300 1 16"/></g></svg><span>Type here to search</span></div>
    <ul class="apps">
      <li><svg><use href="#i-cort"/></svg></li><li><svg><use href="#i-task"/></svg></li><li class="hot"><svg><use href="#i-cam"/></svg></li><li><svg><use href="#i-edge"/></svg></li><li><svg><use href="#i-code"/></svg></li><li class="run"><svg><use href="#i-brave"/></svg></li><li class="run"><svg><use href="#i-out"/></svg></li><li><svg><use href="#i-exp"/></svg></li><li class="run"><svg><use href="#i-chrome"/></svg></li><li class="run"><svg><use href="#i-teams"/></svg></li><li class="run"><svg><use href="#i-gear"/></svg></li><li class="run"><svg><use href="#i-word"/></svg></li><li class="run"><svg><use href="#i-cp"/></svg></li><li class="run"><svg><use href="#i-slack"/></svg></li>
    </ul>
    <svg class="tray" width="70" height="40" viewBox="1700 1040 70 40"><g fill="none" stroke="#fff" stroke-width="1.400"><path d="m1708 1063 5-5.500 5 5.500M1742.500 1056.500h9v8h-9zM1739 1060v4h4M1737.500 1054v4h5v-4M1739 1052v2M1741.500 1052v2"/></g><path d="M1744 1058.500h6v5h-6z" fill="#fff"/></svg>
    <span class="lang">ENG</span>
    <div class="clock"><span>08:02</span><span>14-06-2021</span></div>
    <svg class="notif" width="44" height="40" viewBox="1873 1040 44 40"><path d="M1880 1052h15v12h-9l-3 3v-3h-3z" fill="#fff"/><path d="M1883 1055.500h9M1883 1058.500h9M1883 1061h6" stroke="#004b3d"/><circle cx="1894" cy="1067" r="9.500" fill="#1b7b6c" stroke="#8bc7bc"/><text x="1894" y="1071" text-anchor="middle" fill="#fff" textLength="13">26</text><path d="M1915.500 1040v40" stroke="#4b8277"/></svg>
  </div>
</section>

<section class="cap">
  <header class="c-menu">
    <svg width="50" height="42" viewBox="1920 0 50 42"><text x="1926" y="31" font-size="27" font-weight="700" fill="#1aa351" textLength="30" lengthAdjust="spacingAndGlyphs">Cp</text></svg>
    <span>File</span><span>Edit</span><span>View</span><span>Insert</span><span>Modify</span><span>Project</span><span>Quiz</span><span>Audio</span><span>Video</span><span>Themes</span><span>Window</span><span>Help</span>
    <svg width="926" height="42" viewBox="2680 0 926 42">
      <path d="M2687 9v25" stroke="#6a6c72" stroke-width="1.500"/>
      <path d="M2709 15.500h16v11.500h-16z" fill="none" stroke="#e8e8ea" stroke-width="2"/><path d="M2712 18.500h4v2h-4zM2718 18.500h4v2h-4zM2712 22.500h4v2h-4zM2718 22.500h4v2h-4zM2713 28h8v2h-8z" fill="#e8e8ea"/>
      <path d="M2747 16h19v13.500h-19z" fill="#f0f0f2"/><path d="m2748 17 8.500 7.500 8.500-7.500M2748 29l6-6M2765 29l-6-6" fill="none" stroke="#23262e" stroke-width="1.200"/>
      <path d="M2789 18h5v8h3.500l-6 7-6-7h3.500z" fill="#f4f4f4"/><path d="M2817 34v-8h-3.500l6-7 6 7h-3.500v8z" fill="#6c6e74"/>
      <path d="M2845 14h37v24h-37z" fill="#4b4e58" stroke="#15171c"/>
      <g fill="#e3e4e8" font-size="13.500"><text x="2853" y="29.500">1</text><text x="2900" y="30">/</text><text x="2923" y="29.500">4</text><text x="2981" y="29" textLength="15">66</text></g><path d="M2955.500 17v18" stroke="#e3e4e8" stroke-width="1.500"/><path d="M3056 22h9l-4.500 7z" fill="#808289"/>
    </svg>
    <svg width="232" height="42" viewBox="3608 0 232 42"><path d="M3614 9v25" stroke="#6a6c72" stroke-width="1.500"/><text x="3629" y="25" fill="#f1f1f3" font-size="13.500" textLength="43">Classic</text><path d="M3685 20.500h6.500l-3.200 4z" fill="#fff"/>
      <path d="M3709 1h126v23h-126z" fill="#363a42" stroke="#0e0f12" stroke-width="1.500"/><path d="M3743 1v23M3777 1v23" stroke="#15171b" stroke-width="1.500"/><g fill="none" stroke="#dadce2"><path d="M3718.500 16h13" stroke-width="4"/><path d="M3754 12.500h7.500V18h-7.500zM3759 11V7.500h7V14h-4" stroke-width="2.400"/><path d="m3801.500 7 10 10M3811.500 7l-10 10" stroke-width="3"/></g></svg>
  </header>
  <div class="c-tools">
    <svg width="500" height="88" viewBox="1920 42 500 88">
      <g class="tl"><text x="1936" y="114.500" textLength="38">Slides</text><text x="2020" y="114.500" textLength="48">Themes</text><text x="2108" y="112" textLength="59" class="off">Fluid Box</text><text x="2236" y="114.500" textLength="26">Text</text><text x="2317" y="114.500" textLength="46">Shapes</text><text x="2405" y="114.500">O</text></g>
      <circle cx="1949" cy="71.500" r="18" fill="none" stroke="#4a70b8" stroke-width="2.200"/><path d="M1946 60h6.500v8h7.500v6.500h-7.500v8h-6.500v-8h-7.500V68h7.500z" fill="#6cc385"/>
      <path d="M2016 68c4-4 6 0 11-1 5-1 5-4 5-8 0-6 6-6 11-5 22 6 20 33-4 34-13 0-23-9-23-20z" fill="none" stroke="#4a70b8" stroke-width="2.200"/><g fill="#6b9cff"><circle cx="2028" cy="75.500" r="4"/><circle cx="2041" cy="79" r="3.800"/><circle cx="2051" cy="73" r="3.300"/><circle cx="2048" cy="64.500" r="2.800"/></g>
      <g opacity=".35" fill="none" stroke="#4a70b8" stroke-width="2"><rect x="2109" y="54" width="37" height="27" rx="2"/><path d="M2131 57.500h11v3.500h-11z" fill="#f9526b" stroke="none"/><path d="M2112 63h27v6h-27zM2112 71h21v6h-21z" fill="#a3c2ff" stroke="none"/><rect x="2138" y="65" width="14" height="22" rx="2" fill="#f0f1f7"/><path d="M2144 83h3M2140 72h10" /></g>
      <path d="M2197.500 51v73" stroke="#c9cad0" stroke-width="2"/>
      <path d="M2225 57h40v32h-40z" fill="none" stroke="#4a70b8" stroke-width="2.200"/><path d="M2262 54.500h7V61h-7z" fill="#a8dcf4" stroke="#3d7fa6"/><path d="M2237 64h15v5h-2l-1-2h-2.500v13h2.500v2h-9v-2h2.500V67h-2.500l-1 2h-2z" fill="#f9526b"/>
      <g fill="none" stroke-width="2.200"><circle cx="2322.500" cy="62.500" r="6.500" stroke="#4a70b8"/><path d="m2341 56.500 6.500 10.500h-13z" stroke="#6cc385"/><path d="M2316 77h12.500v11H2316z" stroke="#f9526b"/><path d="m2337 75.500 8 0 4 6-4 6.500h-8l-4-6.500z" stroke="#4a70b8"/></g>
      <path d="M2420 54h-13a3 3 0 0 0-3 3v29a3 3 0 0 0 3 3h13" fill="none" stroke="#4a70b8" stroke-width="2.200"/>
      <g fill="none" stroke="#4a70b8" stroke-width="2.600"><path d="m1975 71.500 4 4 4-4M2066 71l4 4 4-4M2272.500 72l4 4 4-4M2357 70.500l4 4 4-4"/><path d="m2159 71.500 4 4 4-4" opacity=".35"/></g>
    </svg>
    <svg width="240" height="88" viewBox="3600 42 240 88">
      <g class="tl"><text x="3610" y="114.500" textLength="43">Assets</text><text x="3684" y="114.500" textLength="44">Library</text><text x="3756" y="114.500" textLength="66">Properties</text></g>
      <path d="M3618 58h26v10h-7v9h-19z" fill="#fff"/><path d="M3618 79V58h26v10" fill="none" stroke="#4a70b8" stroke-width="3"/><path d="M3617 72l7-6 6 5v8h-13z" fill="#4a70b8"/><circle cx="3637.500" cy="64" r="2.300" fill="#f9526b"/><path d="M3632 69h20v21h-20z" fill="#8fb5ff"/><path d="M3635 71v18M3648.500 71v18" stroke="#fff" stroke-width="2" stroke-dasharray="2 2.500"/><path d="M3637 79h9" stroke="#fff"/>
      <path d="M3687.500 87V58.500a2 2 0 0 1 2-2h13l4 5h21a2 2 0 0 1 2 2V86a2 2 0 0 1-2 2h-38a2 2 0 0 1-2-1z" fill="none" stroke="#4a70b8" stroke-width="2.200"/><path d="M3699 69c4-2 7-1 10 0v12c-3-1-6-1-10 0zM3710 69c3-1 6-2 9.500 0v12c-3-1-6-1-9.500 0z" fill="#6cc385"/>
      <path d="M3775 56h30v6h-30zM3775 68h30v6h-30zM3775 81h30v5.500h-30z" fill="#6e92d4"/>
    </svg>
  </div>
  <div class="c-tabs"><strong>FILMSTRIP</strong><div class="doc-tab"><span>Test-project.cptx*</span><span class="x">×</span></div></div>
  <div class="c-work">
    <aside class="film">
      <svg width="199" height="838" viewBox="1920 160 199 838">
        <path d="M2107 173h8l-4-6zM2107 972h9l-4.500 6zM1931 987v8l-5-4zM2093 987v8l5-4z" fill="#76809a"/>
        <path d="M1927 168h165v123h-165z" fill="#699bfd"/><path d="M1932 172h155.500v114H1932z" fill="#fff"/><path d="M1932 172h155.500v6.500H1932zM1932 280h155.500v6H1932z" fill="#808080"/><path d="M1986 196.500h39.500v31H1986z" fill="#465cff"/><text x="1997" y="213" class="t3 w" textLength="18">Default title</text>
        <g stroke="#c4c5c8"><path d="M1929.500 344.500h161.500v120h-161.500zM1929.500 519.500h161.500v120h-161.500zM1929.500 694.500h161.500v120h-161.500z" fill="#fff"/></g>
        <path d="M1930 345h160.500v9H1930zM1930 455h160.500v9H1930zM1930 520h160.500v9H1930zM1930 630h160.500v9H1930zM1930 695h160.500v9H1930zM1930 805h160.500v9H1930z" fill="#808080"/>
        <path d="M1930 368.500h160.500v14H1930z" fill="#465cff"/><text x="1982" y="362.500" font-size="7" fill="#465cff" textLength="48">Fill In The Blank</text><text x="1932" y="366" class="t3" textLength="12">Video 1/1</text><text x="1937" y="376.500" font-size="4.500" fill="#fff" textLength="90">Complete the sentence below by filling in the blanks.</text><text x="1943" y="391.500" class="t3" textLength="33">Type the response here</text>
        <path d="M1932 441h22v8.500h-22zM1959 441h22v8.500h-22zM1986 441h22v8.500h-22zM1931 608.500h27v8.500h-27zM2054 608.500h27v8.500h-27z" fill="#000a4b"/><path d="M2012 608h32v9.500h-32z" fill="#465cff"/>
        <g class="t3 w"><text x="1941" y="446.500">Clear</text><text x="1968" y="446.500">Back</text><text x="1992" y="446.500">Submit</text><text x="1937" y="614">Review Quiz</text><text x="2017" y="614">POST RESULT</text><text x="2060" y="614">Retake Quiz</text></g>
        <text x="1988" y="535.500" font-size="7" fill="#465cff" textLength="36">Quiz Results</text>
        <g class="t3" text-anchor="end"><text x="2002" y="546">You Scored:</text><text x="2002" y="557.500">Maximum Score:</text><text x="2002" y="569">Correct Questions:</text><text x="2002" y="580">Total Questions:</text><text x="2002" y="591.500">Accuracy:</text><text x="2002" y="603">Attempts:</text></g>
        <g class="t3"><text x="2018" y="546">{score}</text><text x="2018" y="557.500">{max-score}</text><text x="2018" y="569">{correct-questions}</text><text x="2018" y="580">{total-questions}</text><text x="2018" y="591.500">{percent}</text><text x="2018" y="603">{total-attempts}</text></g>
        <g fill="#fff" font-size="13"><text x="1933.500" y="313.500">1</text><text x="1933.500" y="488">2</text><text x="1933.500" y="663">3</text><text x="1933.500" y="838">4</text></g>
      </svg>
    </aside>
    <div class="stage">
      <div class="canvas"><div class="slide"></div></div>
      <div class="vbar"><svg width="12" height="8" viewBox="0 0 12 8"><path d="m2 6.500 4-4 4 4" fill="none" stroke="#606060" stroke-width="2.400"/></svg><i></i><svg width="12" height="8" viewBox="0 0 12 8"><path d="m2 1.500 4 4 4-4" fill="none" stroke="#606060" stroke-width="2.400"/></svg></div>
      <div class="hbar"><svg width="8" height="12" viewBox="0 0 8 12"><path d="m6.500 2-4 4 4 4" fill="none" stroke="#606060" stroke-width="2.400"/></svg><i></i><svg width="8" height="12" viewBox="0 0 8 12"><path d="m1.500 2 4 4-4 4" fill="none" stroke="#606060" stroke-width="2.400"/></svg></div>
      <div class="timeline">TIMELINE</div>
    </div>
  </div>
  <footer class="c-status"><span>Configure Adobe Captivate and Project Preferences</span><span>Filmstrip View</span><span>1024 x 627</span></footer>
  <div class="taskbar tb2">
    <ul class="apps lead"><li><svg><use href="#i-win"/></svg></li><li><svg><use href="#i-find"/></svg></li><li><svg><use href="#i-cort"/></svg></li><li><svg><use href="#i-task"/></svg></li></ul>
    <ul class="apps"><li class="run"><svg><use href="#i-cam"/></svg></li><li><svg><use href="#i-edge"/></svg></li><li><svg><use href="#i-code"/></svg></li><li class="run"><svg><use href="#i-brave"/></svg></li><li class="run"><svg><use href="#i-out"/></svg></li><li><svg><use href="#i-exp"/></svg></li><li class="run"><svg><use href="#i-chrome"/></svg></li><li class="run"><svg><use href="#i-teams"/></svg></li><li class="run"><svg><use href="#i-gear"/></svg></li><li class="run"><svg><use href="#i-word"/></svg></li><li class="run"><svg><use href="#i-cp"/></svg></li><li class="run"><svg><use href="#i-slack"/></svg></li></ul>
    <div class="clock"><span>08:02</span><span>14-06-2021</span></div>
  </div>

  <div class="dialog">
    <div class="d-title">Preferences</div>
    <div class="d-body">
      <div class="d-left">
        <h4>Category</h4>
        <ul class="tree"><li>General Settings</li><li>Defaults</li><li class="shut">Recording</li><li class="shut">Project</li><li class="open">Quiz</li><li class="sub">Reporting</li><li class="sub sel">Settings</li><li class="sub">Pass or Fail</li><li class="sub">Default Labels</li></ul>
        <p>Styles Preview</p>
        <div class="checker"></div>
      </div>
      <div class="d-right">
        <h4>Quiz: Settings</h4>
        <p class="q">Quiz:</p>
        <div class="f f1"><label>Name:</label><div class="input">Quiz</div></div>
        <div class="f f2"><label>Required:</label><div class="combo">Answer All - The user must answer every que...<i class="down"></i>
          <ul class="popup"><li>Optional - The user can skip this quiz</li><li>Required - The user must take the quiz to continue</li><li>Pass Required - The user must pass this quiz to continue</li><li class="cur"><svg width="16" height="16" viewBox="0 0 16 16"><path d="m2 8 4 4.500L12 2" fill="none" stroke="#333" stroke-width="2.400"/></svg>Answer All - The user must answer every question to continue</li></ul></div></div>
        <div class="f f3"><label>Objective ID:</label></div>
        <div class="f f4"><label>Interaction ID Prefix:</label></div>
        <div class="f f5"><label>Note:</label></div>
        <div class="sets">
          <label class="s-lbl">Settings:</label>
          <div class="checks">
            <div class="ck"><i class="box"></i>Shuffle Answers</div><div class="ck"><i class="box"></i>Clear</div><div class="ck"><i class="box"></i>Back</div><div class="ck"><i class="box"></i>Skip</div><div class="ck"><i class="box"><svg><use href="#tick"/></svg></i>Review Mode Navigation Buttons</div><div class="ck"><i class="box"></i>Submit All</div>
            <div class="bt b1"><button disabled>Submit All Messages...</button></div>
            <div class="ck"><i class="box"></i>Branch Aware</div><div class="ck"><i class="box"><svg><use href="#tick"/></svg></i>Show Progress</div>
            <div class="pt">Progress Type:<div class="small">Relative<i class="down"></i></div></div>
            <div class="ck"><i class="box"><svg><use href="#tick"/></svg></i>Allow Backward Movement</div><div class="ck"><i class="box"><svg><use href="#tick"/></svg></i>Show Score at the End of the Quiz</div>
            <div class="bt b2"><button>Quiz Result Messages...</button></div>
            <div class="ck"><i class="box"><svg><use href="#tick"/></svg></i>Allow User to Review the Quiz</div>
            <div class="bt b3"><button>Question Review Messages...</button></div>
            <div class="ck"><i class="box"></i>Hide Playbar in Quiz</div>
          </div>
        </div>
        <div class="d-foot"><a>Help...</a><button class="ok">OK</button><button class="cancel">Cancel</button></div>
      </div>
    </div>
  </div>
</section>
</main>
</body>
</html>
```

FILE: styles.css
```css
* { box-sizing: border-box; margin: 0; padding: 0; }
body { width: 3840px; height: 1080px; overflow: hidden; font-family: "Open Sans", "Noto Sans", sans-serif; font-size: 11.3px; color: #444; }
ul { list-style: none; }
i, em { font-style: normal; }
svg { display: block; flex: none; }
svg text { font-family: "Open Sans", sans-serif; white-space: pre; }
button { font-family: inherit; }
.defs { display: none; }
.desktop { display: flex; width: 3840px; height: 1080px; }

/* Word window */
.word { width: 1920px; height: 1080px; display: flex; flex-direction: column; overflow: hidden; background: #f3f2f1; }
.w-title { height: 34px; flex: none; background: #2b579a; display: grid; grid-template-columns: 491px 296px 366px 472px 75px 24px 196px; align-items: center; color: #c5d3e8; }
.w-title text { font-size: 11.3px; }
.w-title span { line-height: 34px; white-space: nowrap; }
.w-file { padding-bottom: 2px; font-size: 11.5px; }
.w-search { height: 22px; background: #a6b8d4; display: flex; align-items: center; gap: 15px; padding-left: 18px; color: #2b579a; }
.w-title .w-search span { line-height: 20px; font-size: 11px; }
.w-user { grid-column: 5; font-size: 11.6px; }
.w-title .w-avatar { width: 24px; height: 24px; border-radius: 50%; background: #5d3a33; color: #fff; text-align: center; line-height: 24px; font-size: 10.5px; }
.w-tabs { height: 33px; flex: none; display: grid; grid-template-columns: 51px 64px 62px 58px 69px 67px 92px 78px 68px 55px 56px 62px 1fr; padding-left: 17px; font-size: 12.3px; }
.w-tabs > span { line-height: 32px; white-space: nowrap; }
.w-tabs .on { font-weight: 600; position: relative; letter-spacing: -.1px; }
.w-tabs .on::after { content: ""; position: absolute; left: 0; top: 25px; width: 38px; height: 3px; background: #2b579a; }
.w-share { display: flex; justify-content: flex-end; gap: 9px; padding: 4px 13px 0 0; }
.w-share button { height: 23px; border: 1px solid #e1dfdd; border-radius: 2px; background: #fff; color: #2b579a; font-size: 12px; font-weight: 600; letter-spacing: -.3px; display: flex; align-items: center; gap: 3px; padding: 0 6px; white-space: nowrap; }
.w-share button:first-child { width: 67px; }
.w-share button:last-child { width: 99px; }

.ribbon { height: 93px; flex: none; display: flex; padding-top: 1px; border-bottom: 1px solid #d2d0ce; box-shadow: 0 1px 3px rgba(0,0,0,.18); position: relative; z-index: 1; background: #f3f2f1; }
.grp { height: 88px; border-right: 1px solid #c8c6c4; flex: none; }
.grp svg { font-size: 11.2px; fill: #444; }
.grp .dim { color: #b1afad; fill: #b1afad; }
.grp .ital { font-family: "Liberation Serif", serif; font-style: italic; }
.lbl { height: 14px; line-height: 15px; display: grid; color: #555; font-size: 11px; }
.lbl > * { grid-area: 1 / 1; }
.lbl span { justify-self: center; white-space: nowrap; }
.lbl svg { justify-self: end; margin: 4px 2px 0 0; }
.g1 .lbl span { margin-right: 19px; }
.g1 { width: 165px; } .g2 { width: 282px; } .g3 { width: 241px; } .g4 { width: 469px; }
.g5 { width: 87px; } .g6 { width: 110px; } .g7 { width: 59px; } .g8 { width: 74px; }
.g9 { width: 76px; } .g10 { width: 178px; } .g11 { width: 79px; } .g12 { width: 65px; }
.collapse { align-self: flex-end; margin: 0 0 3px 16px; }

.w-body { flex: 1; min-height: 0; display: flex; background: #e6e6e6; }
.w-nav { width: 271px; border-right: 1px solid #c3c3c3; flex: none; overflow: hidden; }
.n-head { display: flex; justify-content: space-between; padding: 14px 19px 0 14px; height: 55px; }
.n-head h2 { font-size: 20px; font-weight: 400; color: #2b579a; line-height: 26px; letter-spacing: -.2px; }
.n-head svg { margin-top: 4px; }
.n-search { margin-left: 14px; width: 238px; height: 24px; border: 1px solid #ababab; background: #fff; display: flex; justify-content: space-between; align-items: center; padding: 0 0 0 2px; color: #666; }
.n-tabs { display: flex; padding: 12px 0 0 14px; height: 51.3px; line-height: 26px; }
.n-tabs .on { width: 53px; padding-left: 1px; height: 30px; font-weight: 600; letter-spacing: -.2px; color: #2b579a; border-bottom: 3px solid #2b579a; }
.n-tabs span:nth-child(2) { margin-left: 10px; padding-left: 13px; width: 58px; border: solid #dadada; border-width: 0 1px; height: 20px; line-height: 26px; }
.n-tabs span:nth-child(3) { padding-left: 14px; }
.n-list li { height: 21px; line-height: 20px; padding-left: 51px; white-space: pre; font-size: 11.4px; }
.n-list .top { padding-left: 19px; display: flex; gap: 8px; font-size: 11.2px; }
.n-list .top::before { content: ""; width: 8px; height: 7px; margin-top: 5px; background: #444; clip-path: polygon(100% 0, 100% 100%, 0 100%); }
.n-list .deep { padding-left: 84px; }
.n-list .sel { background: linear-gradient(#c2d5f2, #c2d5f2) 46px 0 / 193px 20px no-repeat; }

.pages { width: 1649px; display: grid; grid-template-columns: 734px 735px; grid-template-rows: 820px 1fr; column-gap: 17px; row-gap: 13px; padding-left: 73px; overflow: hidden; }
.page { background: #fff; border: 1px solid #c6c6c6; border-top: 0; font-family: Lato, "DejaVu Sans", sans-serif; color: #000; font-size: 12.7px; }
.page.next { border-top: 1px solid #c6c6c6; border-bottom: 0; }
.page p, .page h3 { white-space: nowrap; text-align: justify; text-align-last: justify; }
.page p { height: 16.67px; line-height: 16.67px; }
.page h3 { font-size: 14.4px; font-weight: 700; color: #2f5496; height: 22.33px; line-height: 22.33px; }
.page a { color: #0563c1; text-decoration: underline; }
.page u { text-decoration: underline double #2b5fd0 1px; text-underline-offset: 2px; }
.left { padding-left: 88px; }
.left section { margin-bottom: 17.67px; }
.left .cut { margin: -6px 0 17.3px; width: 511px; }
.in { padding-left: 30px; }
.in2 { padding-left: 27.5px; }
.right { padding-left: 88px; }
.in3 { padding-left: 45px; }
.in4 { padding-left: 37px; }
.in5 { padding-left: 34px; }

/* measured line lengths of the document text */
.left section:nth-of-type(1) > :nth-child(1) { width: 499px; }
.left section:nth-of-type(1) > :nth-child(2) { width: 539px; }
.left section:nth-of-type(1) > :nth-child(3) { width: 524px; }
.left section:nth-of-type(1) > :nth-child(4) { width: 398px; }
.left section:nth-of-type(2) > :nth-child(1) { width: 416px; }
.left section:nth-of-type(2) > :nth-child(2) { width: 536px; }
.left section:nth-of-type(2) > :nth-child(3) { width: 547px; }
.left section:nth-of-type(2) > :nth-child(4) { width: 446px; }
.left section:nth-of-type(3) > :nth-child(1) { width: 480px; }
.left section:nth-of-type(3) > :nth-child(2) { width: 486px; }
.left section:nth-of-type(3) > :nth-child(3) { width: 543px; }
.left section:nth-of-type(3) > :nth-child(4) { width: 157px; }
.left section:nth-of-type(3) > :nth-child(5) { width: 464.5px; }
.left section:nth-of-type(3) > :nth-child(6) { width: 536px; }
.left section:nth-of-type(3) > :nth-child(7) { width: 500px; }
.left section:nth-of-type(4) > :nth-child(1) { width: 295px; }
.left section:nth-of-type(4) > :nth-child(2) { width: 530px; }
.left section:nth-of-type(4) > :nth-child(3) { width: 257px; }
.left section:nth-of-type(4) > :nth-child(4) { width: 528px; }
.left section:nth-of-type(4) > :nth-child(5) { width: 503px; }
.left section:nth-of-type(4) > :nth-child(6) { width: 543px; }
.left section:nth-of-type(4) > :nth-child(7) { width: 265px; }
.left section:nth-of-type(5) > :nth-child(1) { width: 345px; }
.left section:nth-of-type(5) > :nth-child(2) { width: 543px; }
.left section:nth-of-type(5) > :nth-child(3) { width: 548px; }
.left section:nth-of-type(5) > :nth-child(4) { width: 409px; }
.left section:nth-of-type(6) > :nth-child(1) { width: 349px; }
.left section:nth-of-type(6) > :nth-child(2) { width: 534.5px; }
.left section:nth-of-type(6) > :nth-child(3) { width: 531px; }
.left section:nth-of-type(6) > :nth-child(4) { width: 312px; }
.para > :nth-child(1) { width: 426px; }
.para > :nth-child(2) { width: 553.5px; }
.para > :nth-child(3) { width: 108px; }
.para > :nth-child(4) { width: 552px; }
.para > :nth-child(5) { width: 534px; }
.para > :nth-child(6) { width: 235px; }
.para > :nth-child(8) { width: 555px; }
.para > :nth-child(9) { width: 458px; }
.right section > :nth-child(1) { width: 329px; }
.right section > :nth-child(2) { width: 508px; }
.right section > :nth-child(3) { width: 556px; }
.right section > :nth-child(4) { width: 116px; }
.right section > :nth-child(5) { width: 554.5px; }
.right section > :nth-child(6) { width: 497px; }

.criteria { width: 476px; height: 163px; background: #f0f1f7; margin: 15px 0 19px; font-family: "Open Sans", sans-serif; font-size: 12.3px; color: #454950; padding: 8px 0 0 8px; }
.criteria b { display: block; line-height: 18px; font-size: 12.4px; letter-spacing: .1px; color: #33363c; }
.c-row { display: flex; align-items: center; height: 18px; white-space: nowrap; gap: 6px; }
.r1, .r2 { margin-top: 10px; }
.r3 { margin: 12px 0 0 21px; gap: 5px; } .r4 { margin: 15px 0 0 21px; gap: 5px; height: 22px; }
.r3 em { color: #4b8df0; border-bottom: 1px dotted #4b8df0; line-height: 15px; margin-left: -1px; }
.r3 span:nth-child(3) { margin-right: 8px; }
.r3 .radio:nth-of-type(3) { margin-left: 33px; }
.r3 span:last-child { margin-left: 26px; }
.r3 .radio { margin-top: 3px; }
.radio { width: 14px; height: 14px; border-radius: 50%; border: 1.5px solid #a4a9ba; background: #fafafc; flex: none; }
.radio.on { background: radial-gradient(circle, #111 0 2.6px, #fafafc 3.2px); }
.box { width: 15px; height: 15px; border: 1.5px solid #9298ae; background: #fcfcfe; flex: none; display: block; }
.box svg { width: 16px; height: 16px; margin: -2px 0 0 -2px; overflow: visible; }
.c-select { margin-left: 9px; width: 345px; height: 22px; border: 1.5px solid #9aa0b5; background: linear-gradient(#fff, #f0f1f7); line-height: 18px; padding: 0 8px; display: flex; justify-content: space-between; align-items: center; color: #444; }
.down { width: 8px; height: 7px; background: #79809b; clip-path: polygon(0 0, 100% 0, 50% 100%); flex: none; }

.w-status { height: 22px; flex: none; border-top: 1px solid #c6c6c6; display: grid; grid-template-columns: 82px 78px 32px 1fr 480px; padding-left: 8px; font-size: 11px; line-height: 20px; align-items: center; }
.w-status text { font-size: 11px; fill: #444; }

.taskbar { background: #004b3d; color: #fff; display: flex; flex: none; }
.tb1 { height: 40px; }
.start { width: 48px; display: grid; place-items: center; }
.tb1 .apps svg { width: 26px; height: 26px; }
.start svg { width: 27px; height: 27px; }
.tb-search { width: 344px; border: 1px solid #4b8277; background: #316d62; display: flex; align-items: center; gap: 11px; padding-left: 11px; color: #d7e5e2; font-size: 13.8px; white-space: nowrap; }
.apps { display: flex; }
.apps li { display: grid; place-items: center; }
.tb1 .apps li { width: 49px; height: 40px; }
.tb1 .hot { background: linear-gradient(#f57c00, #f57c00) bottom / 100% 3px no-repeat, #857b3a; }
.run { background: linear-gradient(#83e3d3, #83e3d3) bottom / 40px 2px no-repeat; }
.tray { margin-left: 622px; }
.lang { line-height: 40px; width: 22px; margin-left: -3px; font-size: 11px; }
.clock { display: flex; flex-direction: column; text-align: center; white-space: nowrap; }
.tb1 .clock { width: 84px; line-height: 18px; padding-top: 2px; font-size: 11px; }
.notif text { font-size: 11px; }

/* Captivate window */
.cap { width: 1920px; height: 1080px; position: relative; display: flex; flex-direction: column; background: #f0f1f7; overflow: hidden; }
.c-menu { height: 42px; flex: none; background: #23262e; color: #eeeef2; display: grid; grid-template-columns: 56px 44px 46px 54px 59px 69px 67px 51px 62px 60px 73px 77px 42px 928px 232px; font-size: 14.2px; line-height: 41px; white-space: nowrap; }
.c-tools { height: 89px; flex: none; border: solid #8e9096; border-width: 1px 0; display: flex; justify-content: space-between; }
.tl text { font-size: 13.3px; fill: #3c4048; }
.tl .off { fill: #bfc1ca; }
.c-tabs { height: 28px; flex: none; display: flex; border-bottom: 2px solid #44474d; }
.c-tabs strong { width: 205px; border-right: 2px solid #6b6e74; text-align: center; line-height: 28px; font-size: 12px; color: #22252b; padding-right: 2px; }
.doc-tab { width: 174px; border-right: 2px solid #44474d; background: #f5f6fa; display: flex; justify-content: space-between; padding: 0 8px 0 12px; line-height: 23px; font-size: 14.7px; color: #333; white-space: nowrap; }
.c-work { flex: 1; min-height: 0; display: flex; }
.film { width: 205px; background: #5d6069; border: solid #e8e9ef; border-width: 1px 6px 5px 0; }
.t3, .t3 text { font-size: 3.4px; fill: #333; }
.w, .w text { fill: #d5daff; }
.stage { flex: 1; display: grid; grid-template-columns: 1fr 22px; grid-template-rows: 793px 22px 29px; border-left: 1px solid #777a80; }
.canvas { background: #5d6069; padding: 139px 0 0 283px; overflow: hidden; }
.slide { width: 988px; height: 519px; background: #fff; border: 1px solid #9a9ca2; }
.vbar { background: #efefef; border-left: 1px solid #fff; border-right: 1px solid #d6d6d8; display: flex; flex-direction: column; align-items: center; padding: 7px 0; }
.vbar i { width: 19px; height: 227px; background: #c0c0c0; margin: 268px 0 auto; }
.hbar { grid-column: 1 / 3; background: #efefef; border: solid #8e9096; border-width: 0 0 1px; border-top: 1px solid #b0b1b4; display: flex; align-items: center; padding: 0 26px 0 6px; }
.hbar i { width: 988px; height: 19px; background: #cbcbcb; margin: 0 auto 0 268px; }
.timeline { grid-column: 1 / 3; border-bottom: 2px solid #a0a2a8; text-align: center; padding: 1px 0 0 2px; font-weight: 700; font-size: 12px; line-height: 27px; color: #222; }
.c-status { height: 27px; flex: none; background: #23262e; color: #dddde0; display: grid; grid-template-columns: 1fr 127px 158px; font-size: 13.6px; line-height: 24px; padding-left: 6px; white-space: nowrap; border-top: 1px solid #4a4c52; }
.c-status span:nth-child(2) { border-left: 2px solid #c9cacf; padding-left: 11px; font-size: 13.2px; }
.c-status span:nth-child(3) { border-left: 2px solid #8f9197; padding-left: 6px; font-size: 13px; }
.tb2 { height: 50px; }
.tb2 .apps li { width: 62px; height: 50px; }
.tb2 .apps svg { width: 31px; height: 31px; }
.tb2 .lead li { width: 60px; }
.tb2 .lead { margin-right: 3px; }
.tb2 .run { background-size: 51px 3px; }
.tb2 .clock { margin-left: auto; width: 94px; font-size: 13px; line-height: 23px; padding-top: 2px; }

/* Preferences dialog */
.dialog { position: absolute; left: 488px; top: 35px; width: 944px; height: 953px; background: #eff2f8; box-shadow: 0 0 0 1px rgba(90,92,98,.6), 2px 4px 14px rgba(0,0,0,.45); color: #3b3f4a; font-size: 13.5px; display: flex; flex-direction: column; }
.d-title { height: 38px; background: #fff; line-height: 37px; padding-left: 10px; font-size: 13.9px; color: #8a8a8a; flex: none; }
.d-body { flex: 1; min-height: 0; display: grid; grid-template-columns: 267px 1fr; }
.d-left { padding-left: 15px; }
.d-left h4, .d-right h4 { font-size: 13.2px; line-height: 38px; letter-spacing: -.1px; color: #23262e; }
.d-left h4 { height: 36px; }
.tree { margin-left: 9px; width: 218px; height: 456px; border: 1.5px solid #9aa1b8; }
.tree li { height: 23.8px; line-height: 22px; padding-left: 32px; position: relative; }
.tree .sub { padding-left: 57px; }
.tree .sel { background: linear-gradient(#bccfef, #bccfef) 0 0 / 100% 22.5px no-repeat; }
.tree .shut::before { content: ""; position: absolute; left: 6px; top: 8px; width: 8px; height: 10px; background: #222; clip-path: polygon(0 0, 100% 50%, 0 100%); }
.tree .open::before { content: ""; position: absolute; left: 5px; top: 9px; width: 10px; height: 8px; background: #222; clip-path: polygon(0 0, 100% 0, 50% 100%); }
.d-left p { height: 34px; line-height: 36px; }
.checker { width: 237px; height: 341px; background: conic-gradient(#dfdfdf 25%, #fff 0 50%, #dfdfdf 0 75%, #fff 0) 0 0 / 20px 20px; }
.d-right { display: flex; flex-direction: column; }
.d-right h4 { height: 38px; flex: none; }
.q { height: 30px; line-height: 30px; flex: none; }
.f { display: flex; align-items: center; gap: 4px; flex: none; }
.f label { width: 130px; text-align: right; white-space: nowrap; }
.f1 { height: 33px; } .f2 { height: 36px; } .f3 { height: 34px; } .f4 { height: 36px; } .f5 { height: 28px; }
.input { width: 339px; height: 24px; border: 1.5px solid #9097ad; background: #fff; color: #111; padding-left: 5px; line-height: 20px; }
.combo { width: 339px; height: 23px; border: 1.5px solid #9097ad; background: #d0d6e8; padding: 0 6px 0 8px; line-height: 19px; display: flex; justify-content: space-between; align-items: center; position: relative; white-space: nowrap; font-size: 13.5px; }
.popup { position: absolute; left: -3px; top: 22px; width: 484px; height: 110px; background: #eff2f8; border: 1.5px solid #8d94aa; box-shadow: 3px 3px 3px rgba(40,40,50,.7); z-index: 2; font-size: 14.5px; letter-spacing: .25px; }
.popup li { height: 27.5px; line-height: 26px; padding-left: 27px; position: relative; color: #333; }
.popup svg { position: absolute; left: 4px; top: 6px; }
.sets { display: grid; grid-template-columns: 134px 1fr; margin-top: 27.5px; }
.s-lbl { line-height: 28px; }
.ck { height: 27.5px; display: flex; align-items: center; gap: 5px; white-space: nowrap; font-size: 13.6px; }
.bt { padding-left: 19px; }
.b1 { height: 37.5px; padding-top: 10px; } .b2 { height: 36px; padding-top: 6px; } .b3 { height: 37px; padding-top: 9px; }
.dialog button { height: 23px; width: 220px; border: 1.5px solid #9298b0; background: linear-gradient(#fff, #f1f2f8); font-size: 13.6px; color: #3b3f4a; }
.dialog button:disabled { color: #b9bbc4; border-color: #b5b7be; background: #eff0f3; }
.pt { height: 35px; padding-left: 18px; display: flex; align-items: center; gap: 4px; white-space: nowrap; }
.small { width: 107px; height: 24px; border: 1.5px solid #9298b0; background: #f9fafd; padding: 0 6px 0 8px; display: flex; align-items: center; justify-content: space-between; line-height: 19px; }
.d-foot { margin-top: auto; display: flex; align-items: center; padding: 0 52px 51px 0; }
.d-foot a { color: #3d8bcb; margin-right: auto; }
.dialog .ok { width: 116px; height: 32px; border-width: 2.5px; margin-right: 14px; }
.dialog .cancel { width: 112px; height: 30px; }
```
